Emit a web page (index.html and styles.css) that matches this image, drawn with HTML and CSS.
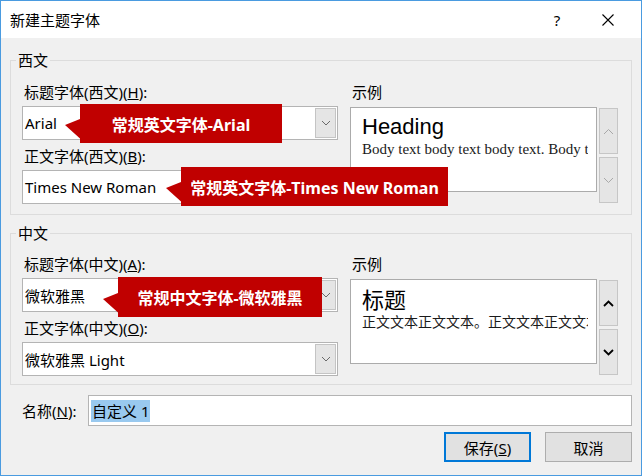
FILE: index.html
```html
<!DOCTYPE html>
<html lang="zh-CN">
<head>
<meta charset="utf-8">
<title>新建主题字体</title>
<link rel="stylesheet" href="styles.css">
</head>
<body>
<div class="window">
  <div class="titlebar">
    <span class="title">新建主题字体</span>
    <span class="help">?</span>
    <svg class="close" width="12" height="12" viewBox="0 0 12 12"><path d="M0.5 0.5 L11.5 11.5 M11.5 0.5 L0.5 11.5" stroke="#000" stroke-width="1.1" fill="none"/></svg>
  </div>
  <div class="content">
    <fieldset class="group">
      <legend>西文</legend>
      <div class="group-grid">
        <div class="fields">
          <div class="field-label">标题字体(西文)(<u>H</u>):</div>
          <div class="combo"><span class="combo-text">Arial</span><span class="drop"><svg width="10" height="6" viewBox="0 0 10 6"><polyline points="1,1 5,5 9,1" class="chev"/></svg></span></div>
          <div class="field-label">正文字体(西文)(<u>B</u>):</div>
          <div class="combo"><span class="combo-text">Times New Roman</span><span class="drop"><svg width="10" height="6" viewBox="0 0 10 6"><polyline points="1,1 5,5 9,1" class="chev"/></svg></span></div>
        </div>
        <div class="sample">
          <div class="field-label">示例</div>
          <div class="sample-row">
            <div class="preview">
              <div class="preview-clip">
                <div class="pv-heading latin">Heading</div>
                <div class="pv-body latin">Body text body text body text. Body text</div>
              </div>
            </div>
            <div class="spin disabled">
              <span class="spin-btn"><svg width="11" height="7" viewBox="0 0 11 7"><polyline points="1,6 5.5,1.5 10,6" class="chev"/></svg></span>
              <span class="spin-btn"><svg width="11" height="7" viewBox="0 0 11 7"><polyline points="1,1 5.5,5.5 10,1" class="chev"/></svg></span>
            </div>
          </div>
        </div>
      </div>
    </fieldset>

    <fieldset class="group group-cn">
      <legend>中文</legend>
      <div class="group-grid">
        <div class="fields">
          <div class="field-label">标题字体(中文)(<u>A</u>):</div>
          <div class="combo"><span class="combo-text">微软雅黑</span><span class="drop"><svg width="10" height="6" viewBox="0 0 10 6"><polyline points="1,1 5,5 9,1" class="chev"/></svg></span></div>
          <div class="field-label">正文字体(中文)(<u>O</u>):</div>
          <div class="combo"><span class="combo-text">微软雅黑 Light</span><span class="drop"><svg width="10" height="6" viewBox="0 0 10 6"><polyline points="1,1 5,5 9,1" class="chev"/></svg></span></div>
        </div>
        <div class="sample">
          <div class="field-label">示例</div>
          <div class="sample-row">
            <div class="preview">
              <div class="preview-clip">
                <div class="pv-heading cjk">标题</div>
                <div class="pv-body cjk">正文文本正文文本。正文文本正文文本。</div>
              </div>
            </div>
            <div class="spin enabled">
              <span class="spin-btn"><svg width="11" height="7" viewBox="0 0 11 7"><polyline points="1,6 5.5,1.5 10,6" class="chev"/></svg></span>
              <span class="spin-btn"><svg width="11" height="7" viewBox="0 0 11 7"><polyline points="1,1 5.5,5.5 10,1" class="chev"/></svg></span>
            </div>
          </div>
        </div>
      </div>
    </fieldset>

    <div class="name-row">
      <span class="name-label">名称(<u>N</u>):</span>
      <div class="name-input"><span class="selected">自定义 1</span></div>
    </div>
    <div class="actions">
      <button class="btn default">保存(<u>S</u>)</button>
      <button class="btn">取消</button>
    </div>
  </div>

  <div class="callout callout-1">常规英文字体-Arial</div>
  <div class="callout callout-2">常规英文字体-Times New Roman</div>
  <div class="callout callout-3">常规中文字体-微软雅黑</div>
</div>
</body>
</html>
```
FILE: styles.css
```css
* { box-sizing: border-box; }
body {
  margin: 0;
  background: #fff;
  font-family: "Noto Sans", "Noto Sans CJK SC", sans-serif;
  font-size: 15px;
  color: #000;
}
.window {
  position: relative;
  width: 642px;
  height: 476px;
  border: 1px solid #4a9be0;
  background: #f0f0f0;
  display: flex;
  flex-direction: column;
}
.titlebar {
  height: 37px;
  flex: none;
  background: #fff;
  display: flex;
  align-items: center;
  padding-left: 9px;
}
.title { flex: 1; line-height: 20px; }
.help { width: 16px; text-align: center; margin-right: 37px; line-height: 20px; }
.close { margin-right: 27px; }

.content { padding: 0 9px; }
.group {
  margin: 12px 0 0;
  padding: 0;
  border: 1px solid #dcdcdc;
  min-inline-size: 0;
}
.group + .group { margin-top: 8px; }
.group legend {
  margin-left: 5px;
  padding: 0 2px;
  line-height: 20px;
}
.group-grid {
  display: grid;
  grid-template-columns: 316px 1fr;
  column-gap: 12px;
  padding: 12px 13px 10px 11px;
}
.group-cn .group-grid { padding-top: 11px; padding-bottom: 8px; }

.field-label {
  height: 20px;
  line-height: 20px;
  padding-left: 2px;
  white-space: nowrap;
}
.fields .combo { margin-top: 4px; }
.fields .combo + .field-label { margin-top: 6px; }

.combo {
  height: 34px;
  border: 1px solid #b4b4b4;
  background: #fff;
  display: flex;
  align-items: center;
}
.combo-text { flex: 1; padding-left: 2px; white-space: nowrap; }
.drop {
  align-self: stretch;
  width: 21px;
  margin: 1px;
  background: #e5e5e5;
  border: 1px solid #c4c4c4;
  display: flex;
  align-items: center;
  justify-content: center;
}
.drop .chev { fill: none; stroke: #6a6a6a; stroke-width: 1; }

.sample-row { display: flex; gap: 2px; margin-top: 5px; }
.preview {
  width: 247px;
  height: 85px;
  border: 1px solid #ababab;
  background: #fff;
  padding: 6px 8px 0 11px;
}
.preview-clip { overflow: hidden; white-space: nowrap; }
.pv-heading.latin {
  font-family: "Liberation Sans", Arial, sans-serif;
  font-size: 22px;
  line-height: 26px;
  color: #000;
}
.pv-body.latin {
  font-family: "Liberation Serif", "Times New Roman", serif;
  font-size: 15px;
  line-height: 18px;
  color: #1a1a1a;
}
.group-cn .preview { padding-top: 4px; }
.pv-heading.cjk {
  font-family: "Noto Sans CJK SC", sans-serif;
  font-weight: 400;
  font-size: 22px;
  line-height: 28px;
  color: #000;
}
.pv-body.cjk {
  font-family: "Noto Sans CJK SC", sans-serif;
  font-size: 14px;
  line-height: 18px;
  color: #1a1a1a;
}

.spin {
  display: flex;
  flex-direction: column;
  gap: 3px;
  margin-top: 1px;
  width: 19px;
}
.spin-btn {
  height: 46px;
  border: 1px solid #c6c6c6;
  background: #e5e5e5;
  display: flex;
  align-items: center;
  justify-content: center;
}
.spin .chev { fill: none; }
.spin.disabled .chev { stroke: #a8a8a8; stroke-width: 1; }
.spin.enabled .chev { stroke: #000; stroke-width: 1.8; }

.name-row {
  display: flex;
  align-items: center;
  margin-top: 10px;
  padding-left: 12px;
}
.name-label { width: 66px; white-space: nowrap; line-height: 20px; }
.name-input {
  flex: 1;
  height: 31px;
  border: 1px solid #b4b4b4;
  background: #fff;
  display: flex;
  align-items: center;
  padding-left: 2px;
}
.selected { background: #99c9ef; line-height: 22px; padding: 0 1px; }

.actions {
  display: flex;
  justify-content: flex-end;
  gap: 14px;
  margin-top: 6px;
}
.btn {
  width: 87px;
  height: 30px;
  border: 1px solid #adadad;
  background: #e1e1e1;
  font-family: inherit;
  font-size: 15px;
  color: #000;
  padding: 0;
}
.btn.default { border: 2px solid #0078d7; }

.callout {
  position: absolute;
  background: #c00000;
  color: #fff;
  font-weight: bold;
  font-size: 16px;
  display: flex;
  align-items: center;
  justify-content: center;
  white-space: nowrap;
  height: 39px;
}
.callout::before {
  content: "";
  position: absolute;
  left: -18px;
  bottom: 0;
  width: 28px;
  height: 26px;
  background: #c00000;
  clip-path: polygon(3px 8px, 18px 2px, 28px 2px, 28px 26px, 23px 26px);
}
.callout-1 { left: 79px; top: 103px; width: 202px; }
.callout-2 { left: 180px; top: 166px; width: 267px; }
.callout-3 { left: 117px; top: 276px; width: 204px; height: 40px; }
```
